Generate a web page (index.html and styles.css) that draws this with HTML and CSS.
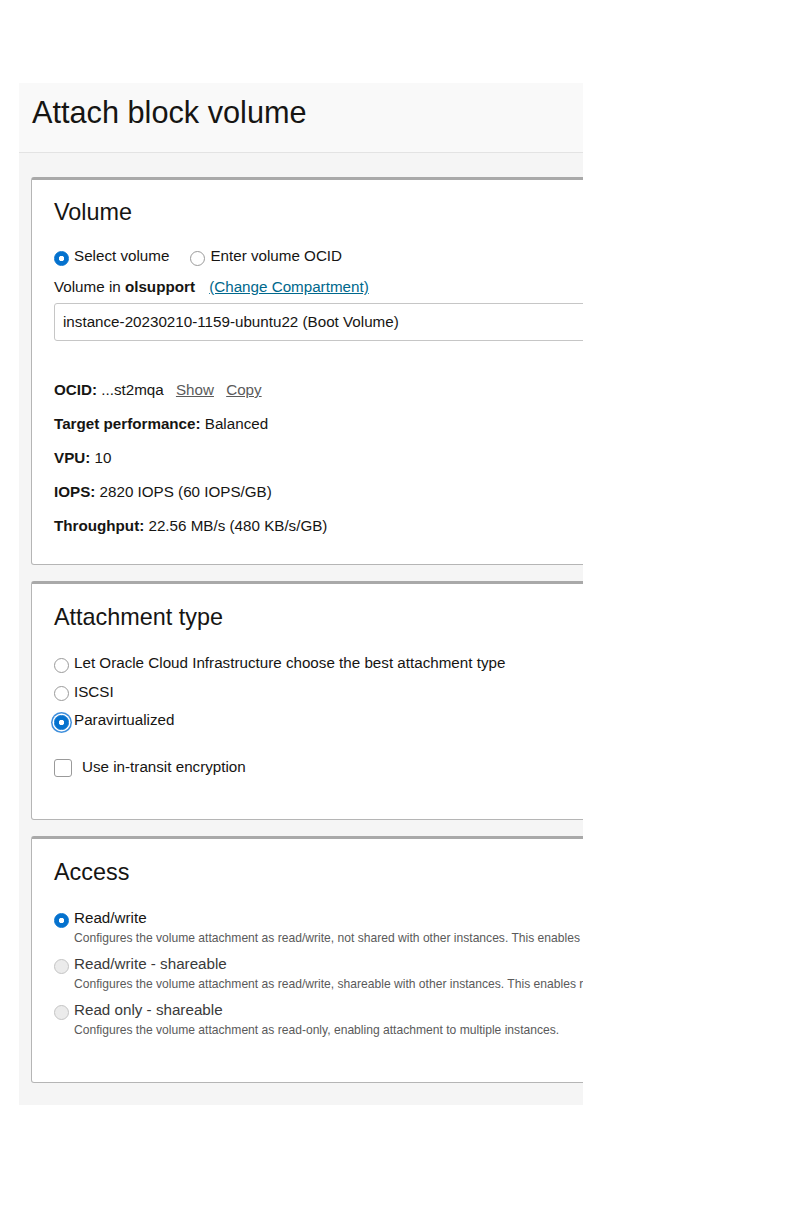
FILE: index.html
```html
<!DOCTYPE html>
<html lang="en">
<head>
  <meta charset="UTF-8">
  <meta name="viewport" content="width=device-width, initial-scale=1.0">
  <title>Attach block volume</title>
  <link rel="stylesheet" href="styles.css">
</head>
<body>
  <div class="panel">
    <div class="panel-header">
      <h1>Attach block volume</h1>
    </div>

    <div class="panel-body">
      <div class="card card-volume">
        <h2>Volume</h2>
        <div class="radio-inline">
          <label class="radio"><input type="radio" name="source" checked>Select volume</label>
          <label class="radio"><input type="radio" name="source">Enter volume OCID</label>
        </div>
        <div class="compartment">
          Volume in <b>olsupport</b> <a href="#" class="link">(Change Compartment)</a>
        </div>
        <div class="select">instance-20230210-1159-ubuntu22 (Boot Volume)</div>

        <div class="details">
          <div class="detail"><b>OCID:</b> ...st2mqa <a href="#" class="action">Show</a> <a href="#" class="action">Copy</a></div>
          <div class="detail"><b>Target performance:</b> Balanced</div>
          <div class="detail"><b>VPU:</b> 10</div>
          <div class="detail"><b>IOPS:</b> 2820 IOPS (60 IOPS/GB)</div>
          <div class="detail"><b>Throughput:</b> 22.56 MB/s (480 KB/s/GB)</div>
        </div>
      </div>

      <div class="card">
        <h2>Attachment type</h2>
        <div class="radio-list">
          <label class="radio"><input type="radio" name="type">Let Oracle Cloud Infrastructure choose the best attachment type</label>
          <label class="radio"><input type="radio" name="type">ISCSI</label>
          <label class="radio"><input type="radio" name="type" class="focused" checked>Paravirtualized</label>
        </div>
        <label class="checkbox"><input type="checkbox">Use in-transit encryption</label>
      </div>

      <div class="card">
        <h2>Access</h2>
        <div class="option">
          <label class="radio"><input type="radio" name="access" checked>Read/write</label>
          <p class="hint">Configures the volume attachment as read/write, not shared with other instances. This enables attachment to a single instance only and is the default configuration.</p>
        </div>
        <div class="option">
          <label class="radio disabled"><input type="radio" name="access" disabled>Read/write - shareable</label>
          <p class="hint">Configures the volume attachment as read/write, shareable with other instances. This enables read/write attachment to multiple instances.</p>
        </div>
        <div class="option">
          <label class="radio disabled"><input type="radio" name="access" disabled>Read only - shareable</label>
          <p class="hint">Configures the volume attachment as read-only, enabling attachment to multiple instances.</p>
        </div>
      </div>
    </div>
  </div>
</body>
</html>
```

FILE: styles.css
```css
body {
  margin: 0;
  font-family: "Liberation Sans", Arial, sans-serif;
  color: #161513;
  background: #fff;
}
.panel {
  width: 564px;
  margin: 83px 0 0 19px;
  background: #f5f5f5;
  overflow: hidden;
}
.panel-header {
  background: #f9f9f9;
  border-bottom: 1px solid #e3e3e3;
  padding: 13px 13px 22px;
}
.panel-header h1 {
  margin: 0;
  font-size: 30.7px;
  font-weight: normal;
  line-height: 34px;
  white-space: nowrap;
}
.panel-body {
  padding: 24px 0 22px 12px;
}
.card {
  width: 760px;
  background: #fff;
  border: 1px solid #b5b5b5;
  border-top: 3px solid #a9a9a9;
  border-radius: 3px;
  padding: 19px 22px 43px;
  margin-bottom: 16px;
  font-size: 15.2px;
  line-height: 20px;
}
.card:last-child {
  margin-bottom: 0;
  padding-bottom: 44px;
}
.card-volume {
  padding-top: 18px;
  padding-bottom: 28px;
}
.card h2 {
  margin: 0 0 22px;
  font-size: 23.4px;
  font-weight: normal;
  line-height: 28px;
}
.card-volume h2 {
  margin-bottom: 20px;
}
.radio {
  display: flex;
  align-items: center;
  gap: 5px;
  white-space: nowrap;
}
.radio input {
  appearance: none;
  -webkit-appearance: none;
  width: 15px;
  height: 15px;
  margin: 4px 0 0;
  border: 1px solid #9a9a9a;
  border-radius: 50%;
  background: #fff;
  box-sizing: border-box;
  flex-shrink: 0;
}
.radio input:checked {
  border-color: #0572ce;
  background: radial-gradient(circle, #fff 0 2.4px, #0572ce 3px);
}
.radio input.focused {
  box-shadow: 0 0 0 1.5px #fff, 0 0 0 3px #3f8fdc;
}
.radio input:disabled {
  border-color: #c4c4c4;
  background: #ebebeb;
}
.radio.disabled {
  color: #3a3a3a;
}
.radio-inline {
  display: flex;
  gap: 21px;
}
.compartment {
  margin-top: 11px;
}
.link {
  margin-left: 10px;
  color: #00688c;
}
.select {
  width: 640px;
  height: 36px;
  margin-top: 6px;
  padding: 0 8px;
  border: 1px solid #c6c6c6;
  border-radius: 3px;
  display: flex;
  align-items: center;
}
.details {
  margin-top: 39px;
  display: flex;
  flex-direction: column;
  gap: 14px;
}
.action {
  margin-left: 8px;
  color: #5b5b5b;
}
.radio-list {
  display: flex;
  flex-direction: column;
  gap: 8.5px;
}
.checkbox {
  display: flex;
  align-items: center;
  gap: 10px;
  margin-top: 28px;
  height: 18px;
}
.checkbox input {
  appearance: none;
  -webkit-appearance: none;
  width: 18px;
  height: 18px;
  margin: 2px 0 0;
  border: 1px solid #9a9a9a;
  border-radius: 3px;
  background: #fff;
  box-sizing: border-box;
}
.option + .option {
  margin-top: 8px;
}
.hint {
  margin: 2px 0 0 20px;
  font-size: 12.1px;
  line-height: 16px;
  color: #5a5a5a;
  white-space: nowrap;
}
```
